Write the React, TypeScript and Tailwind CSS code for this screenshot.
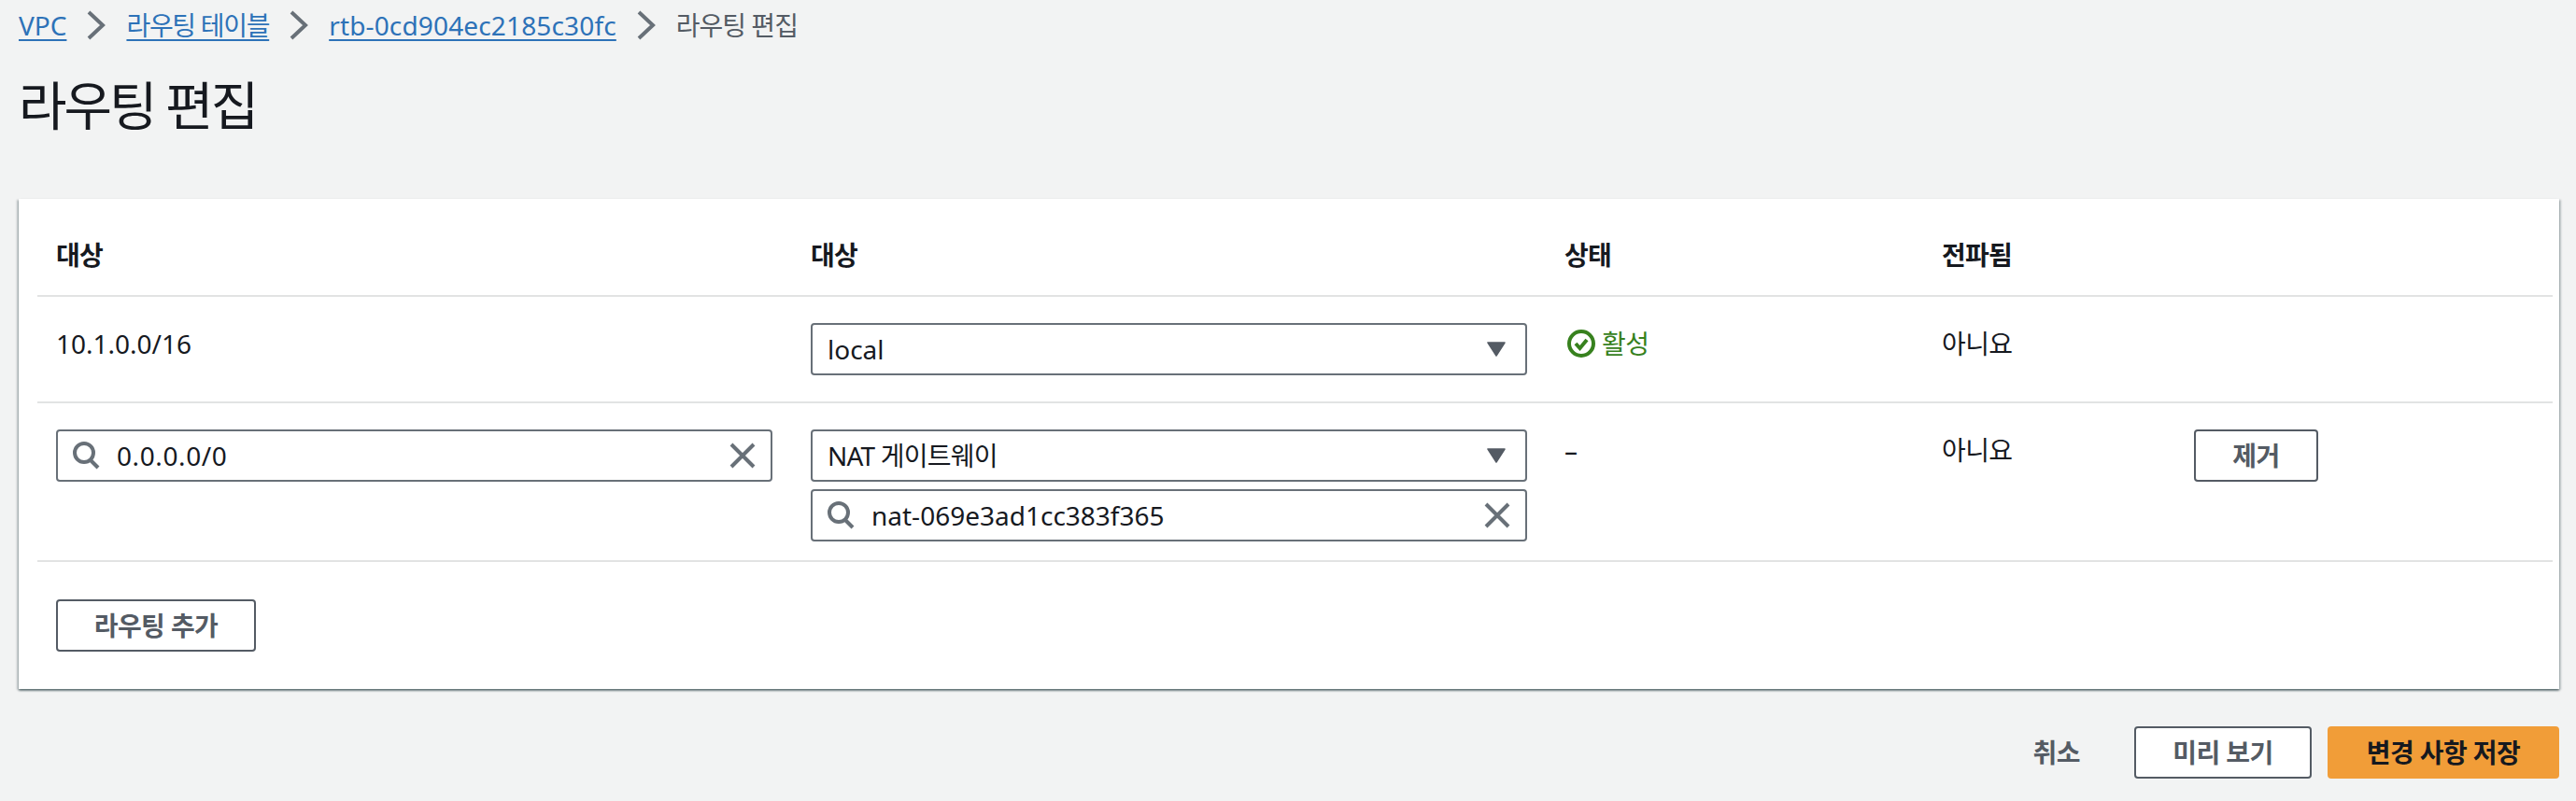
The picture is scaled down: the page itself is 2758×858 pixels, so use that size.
import React from 'react';

const FONT = "font-['Noto_Sans','Noto_Sans_CJK_KR',sans-serif]";
const LINK = 'text-[#2d72b8] underline decoration-2 underline-offset-[4px]';

const Chevron = () => (
  <svg width="20" height="32" viewBox="0 0 20 32" fill="none" className="shrink-0">
    <path d="M2 2 L17 16 L2 30" stroke="#687078" strokeWidth="4" strokeLinejoin="miter" />
  </svg>
);

const Search = () => (
  <svg width="30" height="30" viewBox="0 0 30 30" fill="none" className="shrink-0">
    <circle cx="13" cy="12" r="10" stroke="#687078" strokeWidth="4" />
    <path d="M20 20 L28 28" stroke="#687078" strokeWidth="4" />
  </svg>
);

const Clear = () => (
  <svg width="28" height="28" viewBox="0 0 28 28" fill="none" className="shrink-0">
    <path d="M2 2 L26 26 M26 2 L2 26" stroke="#687078" strokeWidth="4" />
  </svg>
);

const Caret = () => (
  <svg width="20" height="16" viewBox="0 0 20 16" className="shrink-0">
    <path d="M1 1 H19 L10 15 Z" fill="#545b64" stroke="#545b64" strokeWidth="1.5" strokeLinejoin="round" />
  </svg>
);

const StatusOk = () => (
  <svg width="30" height="30" viewBox="0 0 30 30" fill="none" className="shrink-0">
    <circle cx="15" cy="15" r="13" stroke="#37811e" strokeWidth="4" />
    <path d="M9 15 L13.5 20 L21 11" stroke="#37811e" strokeWidth="4" />
  </svg>
);

const SelectBox = ({ value, tight }: { value: string; tight?: boolean }) => (
  <div className="h-[56px] w-[767px] flex items-center justify-between pl-[16px] pr-[21px] bg-white border-2 border-[#687078] rounded-[4px] text-[28px] text-[#16191f]">
    <span className={tight ? 'tracking-[-0.8px]' : ''}>{value}</span>
    <Caret />
  </div>
);

const SearchBox = ({ value, wide }: { value: string; wide?: boolean }) => (
  <div className="h-[56px] w-[767px] flex items-center pl-[15px] pr-[16px] bg-white border-2 border-[#687078] rounded-[4px] text-[28px] text-[#16191f]">
    <Search />
    <span className={`ml-[18px] flex-1 ${wide ? 'tracking-[0.6px]' : ''}`}>{value}</span>
    <Clear />
  </div>
);

const OutlineButton = ({ label, className }: { label: string; className: string }) => (
  <button className={`h-[56px] flex items-center justify-center bg-white border-2 border-[#545b64] rounded-[4px] text-[28px] font-bold text-[#545b64] tracking-[-0.6px] ${className}`}>
    {label}
  </button>
);

const GRID = 'grid grid-cols-[808px_807px_404px_270px_1fr] pl-[20px]';

const App: React.FC = () => {
  return (
    <div className={`${FONT} w-[2758px] h-[858px] bg-[#f2f3f3] overflow-hidden text-[28px] text-[#16191f]`}>
      {/* Breadcrumbs */}
      <nav className="h-[54px] px-[20px] flex items-center text-[#545b64]">
        <a className={LINK}>VPC</a>
        <span className="mx-[22px]"><Chevron /></span>
        <a className={`${LINK} tracking-[-1.3px]`}>라우팅 테이블</a>
        <span className="mx-[22px]"><Chevron /></span>
        <a className={`${LINK} tracking-[0.15px]`}>rtb-0cd904ec2185c30fc</a>
        <span className="mx-[22px]"><Chevron /></span>
        <span className="tracking-[-1px]">라우팅 편집</span>
      </nav>

      <h1 className="mt-[24px] px-[20px] text-[56px] leading-[68px] font-normal tracking-[-3px]">라우팅 편집</h1>

      {/* Route table card */}
      <section className="mt-[67px] ml-[20px] w-[2720px] h-[525px] bg-white pl-[20px] pr-[7px] shadow-[0_2px_2px_0_rgba(0,28,36,0.45),2px_1px_2px_0_rgba(0,28,36,0.2),-2px_1px_2px_0_rgba(0,28,36,0.2)]">
        <div className={`${GRID} h-[105px] items-center pt-[17px] font-bold tracking-[-0.8px] border-b-2 border-[#e2e3e3]`}>
          <div>대상</div>
          <div>대상</div>
          <div>상태</div>
          <div>전파됨</div>
          <div />
        </div>

        <div className={`${GRID} h-[114px] pt-[28px] border-b-2 border-[#e2e3e3]`}>
          <div className="pt-[2px] leading-[40px]">10.1.0.0/16</div>
          <SelectBox value="local" />
          <div className="flex items-center h-[40px] mt-[2px] pl-[3px] text-[#37811e] tracking-[-0.5px]">
            <StatusOk />
            <span className="ml-[7px]">활성</span>
          </div>
          <div className="pt-[2px] leading-[40px] tracking-[-0.6px]">아니요</div>
          <div />
        </div>

        <div className={`${GRID} h-[170px] pt-[28px] border-b-2 border-[#e2e3e3]`}>
          <SearchBox value="0.0.0.0/0" wide />
          <div className="flex flex-col gap-[8px]">
            <SelectBox value="NAT 게이트웨이" tight />
            <SearchBox value="nat-069e3ad1cc383f365" />
          </div>
          <div className="pt-[2px] leading-[40px]">–</div>
          <div className="pt-[2px] leading-[40px] tracking-[-0.6px]">아니요</div>
          <OutlineButton label="제거" className="w-[133px]" />
        </div>

        <div className="pl-[20px] pt-[40px]">
          <OutlineButton label="라우팅 추가" className="w-[214px]" />
        </div>
      </section>

      {/* Footer actions */}
      <footer className="mt-[40px] pr-[18px] flex items-center justify-end font-bold text-[#545b64]">
        <span className="mr-[58px] tracking-[-0.5px]">취소</span>
        <OutlineButton label="미리 보기" className="w-[190px]" />
        <button className="ml-[17px] h-[56px] w-[248px] flex items-center justify-center bg-[#f19d38] rounded-[4px] text-[#16191f] font-bold tracking-[-0.6px]">
          변경 사항 저장
        </button>
      </footer>
    </div>
  );
};

export default App;
